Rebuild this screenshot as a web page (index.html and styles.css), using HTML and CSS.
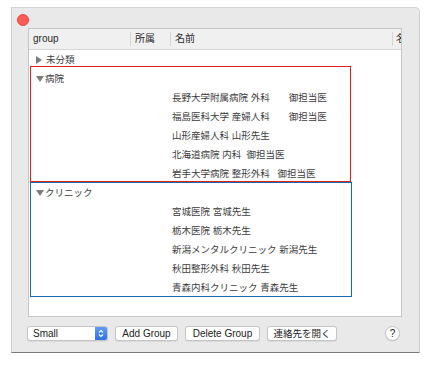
FILE: index.html
```html
<!DOCTYPE html>
<html lang="ja">

<head>
    <meta charset="UTF-8">
    <meta name="viewport" content="width=device-width, initial-scale=1.0">
    <title>group</title>
    <link rel="stylesheet" href="styles.css">
</head>

<body>
    <div class="window">
        <div class="titlebar">
            <span class="close"></span>
        </div>

        <div class="table">
            <div class="thead">
                <div class="th c-group">group</div>
                <div class="th c-org">所属</div>
                <div class="th c-name">名前</div>
                <div class="th c-kana">名前カナ</div>
            </div>

            <div class="tbody">
                <div class="row grp"><span class="tri-right"></span>未分類</div>

                <div class="row grp"><span class="tri-down"></span>病院</div>
                <div class="row item">長野大学附属病院 外科　　御担当医</div>
                <div class="row item">福島医科大学 産婦人科　　御担当医</div>
                <div class="row item">山形産婦人科 山形先生</div>
                <div class="row item">北海道病院 内科  御担当医</div>
                <div class="row item">岩手大学病院 整形外科   御担当医</div>

                <div class="row grp"><span class="tri-down"></span>クリニック</div>
                <div class="row item">宮城医院 宮城先生</div>
                <div class="row item">栃木医院 栃木先生</div>
                <div class="row item">新潟メンタルクリニック 新潟先生</div>
                <div class="row item">秋田整形外科 秋田先生</div>
                <div class="row item">青森内科クリニック 青森先生</div>

                <!-- 注釈の枠 -->
                <div class="mark mark-red"></div>
                <div class="mark mark-blue"></div>
            </div>
        </div>

        <div class="toolbar">
            <div class="popup">
                <span class="popup-label">Small</span>
                <span class="popup-arrows">
                    <svg width="6" height="9" viewBox="0 0 6 9">
                        <path d="M1 3.5 L3 1.5 L5 3.5 M1 5.5 L3 7.5 L5 5.5" fill="none" stroke="#fff" stroke-width="1.1" />
                    </svg>
                </span>
            </div>
            <button class="btn">Add Group</button>
            <button class="btn">Delete Group</button>
            <button class="btn">連絡先を開く</button>
            <button class="help">?</button>
        </div>
    </div>
</body>

</html>
```

FILE: styles.css
```css
body {
    margin: 0;
    background-color: #ffffff;
    font-family: "Liberation Sans", "Noto Sans CJK JP", sans-serif;
}

.window {
    box-sizing: border-box;
    margin: 7px 0 0 11px;
    width: 409px;
    height: 346px;
    background-color: #e9e9e9;
    border: 1px solid #d2d2d2;
    border-bottom-color: #7a7a7a;
    border-top-right-radius: 5px;
}

.titlebar {
    box-sizing: border-box;
    height: 20px;
    padding: 6px 0 0 5px;
}

.close {
    display: block;
    width: 10px;
    height: 10px;
    border-radius: 50%;
    background-color: #fd5b53;
    border: 0.5px solid #e4453e;
}

.table {
    box-sizing: border-box;
    margin-left: 16px;
    width: 374px;
    height: 289px;
    background-color: #ffffff;
    border: 1px solid #c6c6c6;
    overflow: hidden;
}

.thead {
    display: flex;
    height: 20px;
    background-color: #f0f0f0;
    border-bottom: 1px solid #d6d6d6;
}

.th {
    box-sizing: border-box;
    flex: none;
    padding-left: 4px;
    font-size: 10px;
    line-height: 20px;
    color: #2a2a2a;
    white-space: nowrap;
    overflow: hidden;
}

.th + .th {
    border-left: 1px solid #d6d6d6;
    margin-top: 3px;
    line-height: 14px;
    height: 14px;
}

.c-group {
    width: 101px;
}

.c-org {
    width: 40px;
}

.c-name {
    width: 222px;
}

.c-kana {
    width: 40px;
    padding-left: 3px;
}

.tbody {
    position: relative;
}

.row {
    height: 19px;
    line-height: 19px;
    font-size: 9.5px;
    color: #3c3c3c;
    white-space: pre;
}

.grp {
    display: flex;
    align-items: center;
    padding-left: 7px;
}

.item {
    padding-left: 143px;
}

.tri-right {
    width: 0;
    height: 0;
    margin-right: 4px;
    border-top: 4px solid transparent;
    border-bottom: 4px solid transparent;
    border-left: 6px solid #7d7d7d;
}

.tri-down {
    width: 0;
    height: 0;
    margin-right: 1px;
    border-left: 4px solid transparent;
    border-right: 4px solid transparent;
    border-top: 6px solid #7d7d7d;
}

.mark {
    position: absolute;
    left: 1px;
    box-sizing: border-box;
}

.mark-red {
    top: 16px;
    width: 321px;
    height: 116px;
    border: 1px solid #e3231b;
}

.mark-blue {
    top: 132px;
    width: 322px;
    height: 115px;
    border: 1px solid #1867b3;
}

.toolbar {
    display: flex;
    align-items: center;
    gap: 7px;
    margin-top: 9px;
    padding-left: 15px;
    padding-right: 19px;
    height: 15px;
}

.popup {
    box-sizing: border-box;
    display: flex;
    width: 81px;
    height: 15px;
    background-color: #ffffff;
    border: 1px solid #c4c4c4;
    border-radius: 3px;
    overflow: hidden;
    box-shadow: 0 0.5px 0.5px rgba(0, 0, 0, 0.12);
}

.popup-label {
    flex: 1;
    padding-left: 5px;
    font-size: 10px;
    line-height: 13px;
    color: #222222;
}

.popup-arrows {
    display: flex;
    align-items: center;
    justify-content: center;
    width: 12px;
    background: linear-gradient(#5f9cf8, #2f6fe8);
}

.btn {
    box-sizing: border-box;
    height: 15px;
    margin: 0;
    padding: 0;
    background-color: #ffffff;
    border: 1px solid #c4c4c4;
    border-radius: 3px;
    box-shadow: 0 0.5px 0.5px rgba(0, 0, 0, 0.12);
    font-family: "Liberation Sans", "Noto Sans CJK JP", sans-serif;
    font-size: 10px;
    line-height: 13px;
    color: #222222;
    white-space: nowrap;
}

.btn:nth-of-type(1) {
    width: 63px;
}

.btn:nth-of-type(2) {
    width: 75px;
}

.btn:nth-of-type(3) {
    width: 70px;
    font-size: 9.5px;
}

.help {
    box-sizing: border-box;
    width: 15px;
    height: 15px;
    margin: 0 0 0 auto;
    padding: 0;
    border-radius: 50%;
    background-color: #ffffff;
    border: 1px solid #c4c4c4;
    box-shadow: 0 0.5px 0.5px rgba(0, 0, 0, 0.12);
    font-family: "Liberation Sans", sans-serif;
    font-size: 10px;
    line-height: 13px;
    color: #222222;
}
```
